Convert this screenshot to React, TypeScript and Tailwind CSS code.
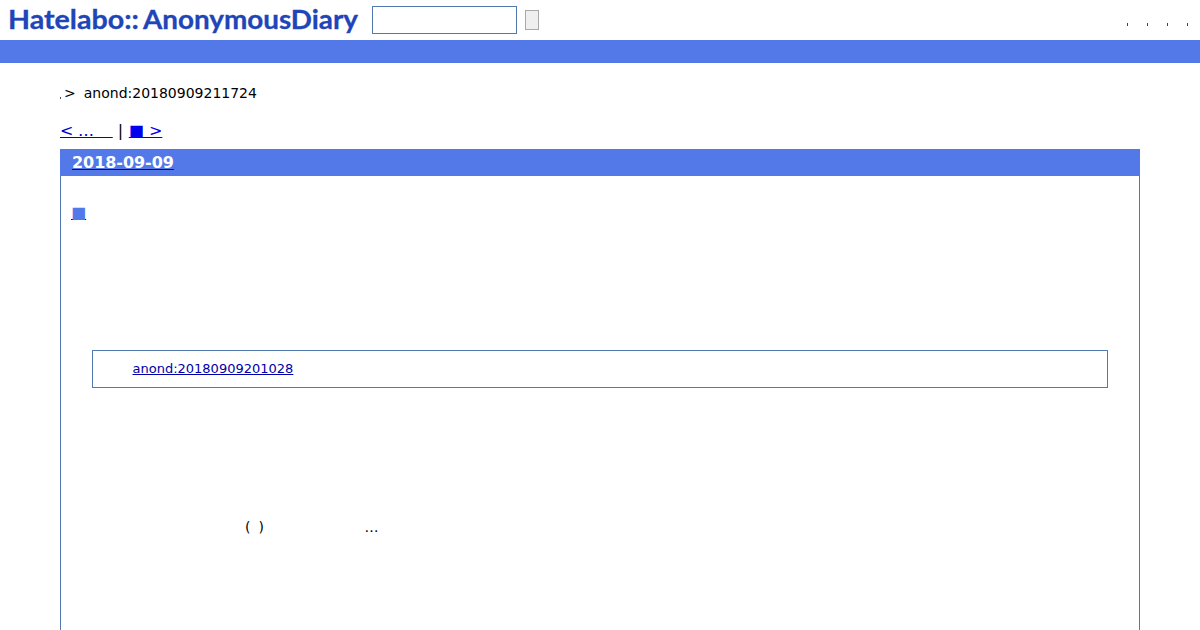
const menuItems = [1, 2, 3, 4];

function Logo() {
  return (
    <svg width="350" height="38" viewBox="0 0 350 38" className="block shrink-0" fill="#2045b8" stroke="#2045b8" strokeWidth="0.3">
      <g fontFamily="Lato, 'Open Sans', sans-serif" fontWeight="700" fontSize="27">
        <text x="-1" y="28.5" textLength="131" lengthAdjust="spacingAndGlyphs">Hatelabo::</text>
        <text x="134" y="28.5" textLength="215" lengthAdjust="spacingAndGlyphs">AnonymousDiary</text>
      </g>
    </svg>
  );
}

function Header() {
  return (
    <header>
      <div className="flex h-10 items-start pl-[9px]">
        <a href="#">
          <Logo />
        </a>
        <form className="ml-[13px] flex pt-1.5" onSubmit={(e) => e.preventDefault()}>
          <input type="text" className="h-7 w-[145px] border border-[#5279b0] bg-white px-1 outline-none" />
          <button className="mt-1 ml-2 h-5 w-3.5 border border-[#a8a8a8] bg-[#efefef]" />
        </form>
        <ul className="mt-[23px] mr-3 ml-auto flex gap-[19px]">
          {menuItems.map((item) => (
            <li key={item} className="h-[3px] w-px bg-[#444]" />
          ))}
        </ul>
      </div>
      <div className="h-[23px] bg-[#5279e7]" />
    </header>
  );
}

function Pager() {
  return (
    <div className="mt-4 flex h-6 items-center text-base leading-6 whitespace-pre">
      <a href="#" className="tracking-[-0.3px] text-[#0000cc] underline">{"< …\u00a0\u00a0\u00a0\u00a0"}</a>
      <span className="ml-[5px] w-[11px]">|</span>
      <a href="#" className="text-[#0000ee] underline">{"■ >"}</a>
    </div>
  );
}

export default function App() {
  return (
    <div className="h-[630px] overflow-hidden bg-white font-['DejaVu_Sans',sans-serif] text-black">
      <Header />
      <main className="px-[60px]">
        {/* Breadcrumb */}
        <div className="mt-5 flex h-5 items-center text-sm leading-5">
          <span className="mt-[9px] h-[2px] w-px bg-[#555]" />
          <span className="ml-[3px]">&gt;</span>
          <span className="ml-2">anond:20180909211724</span>
        </div>
        <Pager />

        <section className="mt-1.5 h-[520px] border border-[#5279b0]">
          <h2 className="-mx-px -mt-px h-[27px] bg-[#5279e7] pl-3 text-base leading-[27px] font-bold tracking-[-0.05px]">
            <a href="#" className="text-white underline decoration-[#0000cc]">2018-09-09</a>
          </h2>
          <h3 className="mt-[25px] ml-2.5 h-6 text-base leading-6">
            <a href="#" className="text-[#5279e7] underline decoration-[#0000aa]">■</a>
          </h3>
          <blockquote className="mx-[31px] mt-[125px] flex h-[38px] items-center border border-[#5279b0] pl-[39.5px] text-[13px]">
            <a href="#" className="text-[#0000aa] underline">anond:20180909201028</a>
          </blockquote>
          <p className="mt-[129px] flex h-5 pl-[184px] text-sm leading-5">
            <span>(</span>
            <span className="ml-2">)</span>
            <span className="ml-[100.5px]">…</span>
          </p>
        </section>
      </main>
    </div>
  );
}
